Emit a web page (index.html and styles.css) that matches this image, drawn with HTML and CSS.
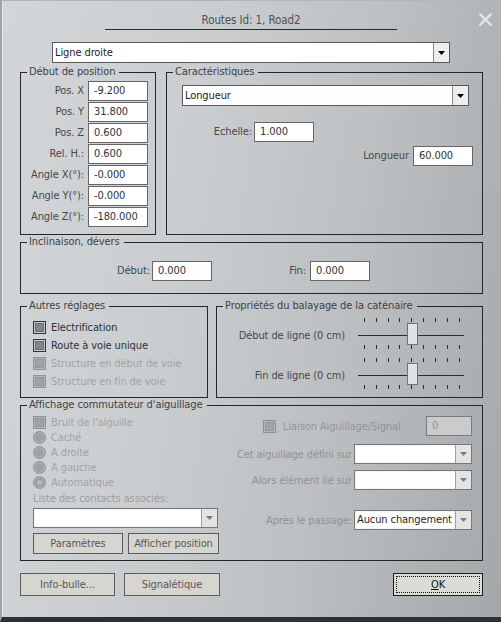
FILE: index.html
```html
<!DOCTYPE html>
<html lang="fr">
<head>
<meta charset="utf-8">
<title>Routes</title>
<link rel="stylesheet" href="styles.css">
</head>
<body>
<div class="dlg">
  <div class="titlebar">
    <div class="title">Routes Id: 1, Road2</div>
    <svg class="close" width="15" height="15" viewBox="0 0 15 15"><path d="M1.5 1.5 L13.5 13.5 M13.5 1.5 L1.5 13.5" stroke="#e8e9ea" stroke-width="1.9" fill="none"/></svg>
  </div>

  <div class="combo main-combo"><span class="val">Ligne droite</span><span class="btn"><svg width="7" height="4" viewBox="0 0 7 4"><path d="M0 0 H7 L3.5 4 Z" fill="#000"/></svg></span></div>

  <div class="row1">
    <fieldset class="grp g-pos">
      <legend>Début de position</legend>
      <div class="pos-body">
        <div class="frow"><span class="lbl">Pos. X</span><span class="inp">-9.200</span></div>
        <div class="frow"><span class="lbl">Pos. Y</span><span class="inp">31.800</span></div>
        <div class="frow"><span class="lbl">Pos. Z</span><span class="inp">0.600</span></div>
        <div class="frow"><span class="lbl">Rel. H.:</span><span class="inp">0.600</span></div>
        <div class="frow"><span class="lbl">Angle X(°):</span><span class="inp">-0.000</span></div>
        <div class="frow"><span class="lbl">Angle Y(°):</span><span class="inp">-0.000</span></div>
        <div class="frow"><span class="lbl">Angle Z(°):</span><span class="inp">-180.000</span></div>
      </div>
    </fieldset>
    <fieldset class="grp g-car">
      <legend>Caractéristiques</legend>
      <div class="car-body">
        <div class="combo car-combo"><span class="val">Longueur</span><span class="btn"><svg width="7" height="4" viewBox="0 0 7 4"><path d="M0 0 H7 L3.5 4 Z" fill="#000"/></svg></span></div>
        <div class="ech-row"><span class="lbl ech-lbl">Echelle:</span><span class="inp">1.000</span></div>
        <div class="lon-row"><span class="lbl">Longueur</span><span class="inp">60.000</span></div>
      </div>
    </fieldset>
  </div>

  <fieldset class="grp g-inc">
    <legend>Inclinaison, dévers</legend>
    <div class="inc-body">
      <span class="lbl inc-l1">Début:</span><span class="inp">0.000</span>
      <span class="lbl inc-l2">Fin:</span><span class="inp">0.000</span>
    </div>
  </fieldset>

  <div class="row2">
    <fieldset class="grp g-aut">
      <legend>Autres réglages</legend>
      <div class="aut-body">
        <div class="chk"><span class="cb"></span><span>Electrification</span></div>
        <div class="chk"><span class="cb"></span><span>Route à voie unique</span></div>
        <div class="chk dis"><span class="cb"></span><span>Structure en début de voie</span></div>
        <div class="chk dis"><span class="cb"></span><span>Structure en fin de voie</span></div>
      </div>
    </fieldset>
    <fieldset class="grp g-cat">
      <legend>Propriétés du balayage de la caténaire</legend>
      <div class="cat-body">
        <div class="srow">
          <span class="lbl slbl">Début de ligne (0 cm)</span>
          <svg class="slider" width="112" height="40" viewBox="0 0 112 40">
            <g stroke="#2b2b2b" stroke-width="1">
              <path d="M9.5 3V7M21.5 3V7M33.5 3V7M44.5 3V7M56.5 3V7M68.5 3V7M80.5 3V7M92.5 3V7M104.5 3V7"/>
              <path d="M9.5 30V34M21.5 30V34M33.5 30V34M44.5 30V34M56.5 30V34M68.5 30V34M80.5 30V34M92.5 30V34M104.5 30V34"/>
              <path d="M3 20.5H109"/>
            </g>
            <rect x="52.5" y="8.5" width="10" height="21" fill="#e1e2e3" stroke="#707274"/>
          </svg>
        </div>
        <div class="srow">
          <span class="lbl slbl">Fin de ligne (0 cm)</span>
          <svg class="slider" width="112" height="40" viewBox="0 0 112 40">
            <g stroke="#2b2b2b" stroke-width="1">
              <path d="M9.5 3V7M21.5 3V7M33.5 3V7M44.5 3V7M56.5 3V7M68.5 3V7M80.5 3V7M92.5 3V7M104.5 3V7"/>
              <path d="M9.5 30V34M21.5 30V34M33.5 30V34M44.5 30V34M56.5 30V34M68.5 30V34M80.5 30V34M92.5 30V34M104.5 30V34"/>
              <path d="M3 20.5H109"/>
            </g>
            <rect x="52.5" y="8.5" width="10" height="21" fill="#e1e2e3" stroke="#707274"/>
          </svg>
        </div>
      </div>
    </fieldset>
  </div>

  <fieldset class="grp g-aff">
    <legend class="dis-t">Affichage commutateur d'aiguillage</legend>
    <div class="aff-body">
      <div class="aff-left">
        <div class="chk sm dis"><span class="cb"></span><span>Bruit de l'aiguille</span></div>
        <div class="chk sm dis"><span class="rd"></span><span>Caché</span></div>
        <div class="chk sm dis"><span class="rd"></span><span>A droite</span></div>
        <div class="chk sm dis"><span class="rd"></span><span>A gauche</span></div>
        <div class="chk sm dis"><span class="rd on"></span><span>Automatique</span></div>
        <div class="liste dis-t">Liste des contacts associés:</div>
        <div class="combo dcombo liste-combo"><span class="val"></span><span class="btn"><svg width="7" height="4" viewBox="0 0 7 4"><path d="M0 0 H7 L3.5 4 Z" fill="#7a7a7a"/></svg></span></div>
        <div class="btnrow">
          <span class="pbtn b-par">Paramètres</span>
          <span class="pbtn b-aff">Afficher position</span>
        </div>
      </div>
      <div class="aff-right">
        <div class="lia-row dis">
          <span class="cb"></span><span class="lia-t">Liaison Aiguillage/Signal.</span>
          <span class="inp dinp">0</span>
        </div>
        <div class="crow r-cet"><span class="dis-t">Cet aiguillage défini sur</span><span class="combo dcombo rc"><span class="val"></span><span class="btn"><svg width="7" height="4" viewBox="0 0 7 4"><path d="M0 0 H7 L3.5 4 Z" fill="#7a7a7a"/></svg></span></span></div>
        <div class="crow r-alo"><span class="dis-t">Alors élément lié sur</span><span class="combo dcombo rc"><span class="val"></span><span class="btn"><svg width="7" height="4" viewBox="0 0 7 4"><path d="M0 0 H7 L3.5 4 Z" fill="#7a7a7a"/></svg></span></span></div>
        <div class="crow r-apr"><span class="dis-t">Après le passage:</span><span class="combo dcombo rc"><span class="val blk">Aucun changement</span><span class="btn"><svg width="7" height="4" viewBox="0 0 7 4"><path d="M0 0 H7 L3.5 4 Z" fill="#7a7a7a"/></svg></span></span></div>
      </div>
    </div>
  </fieldset>

  <div class="bottom">
    <span class="pbtn b-info">Info-bulle...</span>
    <span class="pbtn b-sig">Signalétique</span>
    <span class="pbtn b-ok"><span class="focus"><u>O</u>K</span></span>
  </div>
</div>
</body>
</html>
```

FILE: styles.css
```css
* { box-sizing: border-box; }
html, body { margin: 0; padding: 0; }
body {
  width: 501px;
  height: 622px;
  overflow: hidden;
  font-family: "DejaVu Sans Condensed", "DejaVu Sans", sans-serif;
  font-stretch: semi-condensed;
  font-size: 11px;
  letter-spacing: -0.1px;
  color: #474747;
}
.dlg {
  width: 501px;
  height: 622px;
  border-top: 1px solid #b3b6b8;
  border-left: 2px solid #a2a5a7;
  border-bottom: 5px solid #2c3136;
  box-shadow: inset 1px 0 0 #e6e7e8;
  background: linear-gradient(100deg, #d3d6d8 0%, #cbced0 35%, #bdc0c3 65%, #a5a8ab 100%);
  padding: 0 18px;
  display: flex;
  flex-direction: column;
}
.titlebar { display: flex; align-items: flex-start; flex-shrink: 0; }
.title {
  margin-left: 85px;
  width: 292px;
  flex-shrink: 0;
  padding-top: 11px;
  line-height: 17px;
  text-align: center;
  border-bottom: 1px solid #2a2a2a;
  color: #4e5052;
  font-size: 11.5px;
}
.close { margin-left: 81px; margin-top: 11px; flex-shrink: 0; display: block; }

/* combos */
.combo {
  display: flex;
  background: #fff;
  border: 1px solid #5a5a5a;
  flex-shrink: 0;
}
.combo .val { flex: 1; padding-left: 2px; color: #222; white-space: nowrap; overflow: hidden; }
.combo .btn {
  width: 16px;
  border-left: 1px solid #8a8a8a;
  background: #eeeeee;
  display: flex;
  align-items: center;
  justify-content: center;
}
.combo .btn svg { display: block; }
.main-combo { margin-top: 12px; margin-left: 32px; width: 398px; height: 21px; line-height: 19px; }
.car-combo { width: 287px; height: 21px; line-height: 19px; }
.dcombo { border-color: #777; box-shadow: inset 0 0 0 1px #f4f4f4; height: 20px; line-height: 18px; }
.dcombo .btn { background: #e4e4e4; border-left-color: #a0a0a0; }

/* groups */
fieldset.grp {
  margin: 0;
  padding: 0;
  border: 1px solid #262626;
  min-width: 0;
  flex-shrink: 0;
}
fieldset.grp legend {
  margin-left: 6px;
  padding: 0 4px 0 2px;
  line-height: 14px;
  color: #3f4143;
}
.lbl { color: #464849; white-space: nowrap; }
.inp {
  display: block;
  width: 60px;
  height: 20px;
  border: 1px solid #666;
  background: #fff;
  padding-left: 5px;
  line-height: 18px;
  color: #333;
  flex-shrink: 0;
}

.row1 { display: flex; gap: 10px; margin-top: 2px; flex-shrink: 0; }
.g-pos { width: 136px; height: 170px; }
.g-car { width: 317px; height: 170px; }
.pos-body { padding: 2px 0 0 0; }
.frow { display: flex; height: 20px; margin-bottom: 1px; }
.frow:last-child { margin-bottom: 0; }
.frow .lbl { width: 63px; text-align: right; line-height: 20px; }
.frow .inp { margin-left: 4px; }

.car-body { padding: 6px 9px 0 15px; }
.ech-row { display: flex; margin-top: 16px; }
.ech-lbl { width: 71px; text-align: right; padding-right: 1px; line-height: 20px; }
.ech-row .inp { margin-left: 1px; }
.lon-row { display: flex; justify-content: flex-end; margin-top: 4px; }
.lon-row .lbl { line-height: 20px; margin-right: 4px; }

.g-inc { margin-top: 4px; width: 463px; height: 59px; }
.inc-body { display: flex; padding: 12px 0 0; }
.inc-body .lbl { line-height: 20px; text-align: right; }
.inc-l1 { width: 131px; padding-right: 2px; }
.inc-l2 { width: 98px; padding-right: 4px; }

.row2 { display: flex; gap: 8px; margin-top: 5px; flex-shrink: 0; }
.g-aut { width: 188px; height: 99px; }
.g-cat { width: 267px; height: 99px; }
.aut-body { padding: 5px 0 0 12px; }
.chk { display: flex; align-items: center; height: 18px; color: #2e3032; white-space: nowrap; }
.chk.sm { height: 15px; }
.cb {
  width: 13px;
  height: 13px;
  flex-shrink: 0;
  border: 1px solid #333;
  background: #838587;
  box-shadow: inset 0 0 0 1px #c9cbcd, inset 0 0 0 2px #6a6c6e;
  margin-right: 5px;
}
.dis { color: #a0a3a6; }
.dis-t { color: #9b9ea1; }
.dis .cb {
  border-color: #8e9092;
  background: #a1a3a5;
  box-shadow: inset 0 0 0 1px #b6b8ba, inset 0 0 0 2px #939597;
}
.rd {
  width: 13px;
  height: 13px;
  flex-shrink: 0;
  border-radius: 50%;
  border: 1px solid #8d8f91;
  background: #9fa1a3;
  box-shadow: inset 0 0 0 1px #b4b6b8;
  margin-right: 5px;
}
.rd.on { background: radial-gradient(circle, #b5b7b9 0 2.5px, #8f9193 3.5px, #9fa1a3 4.5px); }

.cat-body { padding: 2px 0 0; }
.srow { display: flex; align-items: center; height: 40px; }
.slbl { width: 128px; text-align: right; }
.slider { display: block; margin-left: 10px; }

.g-aff { margin-top: 8px; width: 463px; height: 163px; }
.aff-body { display: flex; align-items: flex-start; }
.aff-left { width: 221px; padding: 3px 0 0 12px; flex-shrink: 0; }
.liste { line-height: 14px; margin-top: 2px; white-space: nowrap; }
.liste-combo { margin-top: 2px; width: 185px; }
.btnrow { display: flex; gap: 5px; margin-top: 5px; }
.pbtn {
  display: flex;
  align-items: center;
  justify-content: center;
  background: #d6d5cf;
  border: 1px solid #5c5c5c;
  color: #585858;
  white-space: nowrap;
  flex-shrink: 0;
}
.b-par { width: 90px; height: 21px; }
.b-aff { width: 91px; height: 21px; }
.aff-right { width: 240px; padding: 4px 10px 0 0; }
.lia-row { display: flex; align-items: center; height: 20px; }
.lia-row .cb { margin-left: 21px; margin-right: 7px; }
.lia-t { color: #929598; white-space: nowrap; }
.dinp { margin-left: auto; width: 46px; background: #c9cbcd; border-color: #7a7a7a; color: #8f9193; }
.crow { display: flex; justify-content: flex-end; align-items: center; white-space: nowrap; }
.crow > .dis-t { margin-right: 2px; color: #8e9194; }
.rc { width: 118px; }
.r-cet { margin-top: 8px; }
.r-alo { margin-top: 6px; }
.r-apr { margin-top: 20px; }
.blk { color: #1e1e1e !important; }

.bottom { display: flex; margin-top: 12px; flex-shrink: 0; }
.b-info { width: 95px; height: 23px; }
.b-sig { width: 96px; height: 23px; margin-left: 9px; }
.b-ok {
  width: 90px;
  height: 23px;
  margin-left: auto;
  border-color: #1e1e1e;
  background: #dcdcd6;
  color: #111;
  padding: 2px;
}
.b-ok .focus {
  width: 100%;
  height: 100%;
  border: 1px dotted #111;
  display: flex;
  align-items: center;
  justify-content: center;
}
.b-ok u { text-decoration: underline; text-underline-offset: 1px; }
```
